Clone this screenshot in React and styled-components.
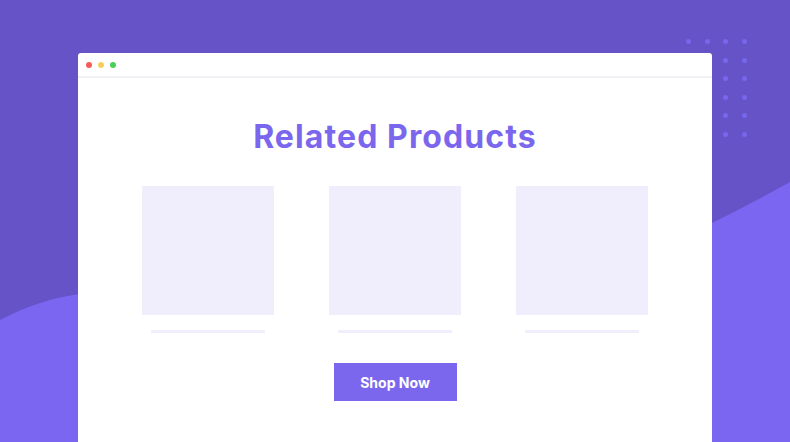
import React from "react";
import styled, { createGlobalStyle } from "styled-components";

const Global = createGlobalStyle`
  html, body { margin: 0; padding: 0; }
  body { font-family: Inter, "Open Sans", Arial, sans-serif; }
`;

const Stage = styled.div`
  position: relative;
  width: 790px;
  height: 442px;
  overflow: hidden;
  background: #6553c7;
  box-sizing: border-box;
  padding: 53px 0 0 78px;
`;

const Wave = styled.svg`
  position: absolute;
  inset: 0;
  width: 790px;
  height: 442px;
`;

const DotGrid = styled.div`
  position: absolute;
  left: 686px;
  top: 39px;
  display: grid;
  grid-template-columns: repeat(4, 5px);
  grid-auto-rows: 5px;
  column-gap: 13.7px;
  row-gap: 13.6px;
`;

const Dot = styled.span`
  width: 5px;
  height: 5px;
  border-radius: 50%;
  background: #7767ec;
  opacity: ${(p) => (p.$hidden ? 0 : 1)};
`;

const Window = styled.div`
  position: relative;
  width: 634px;
  height: 389px;
  background: #ffffff;
  border-radius: 3px 3px 0 0;
  display: flex;
  flex-direction: column;
`;

const TopBar = styled.div`
  height: 23px;
  border-bottom: 2px solid #f1f1f6;
  display: flex;
  align-items: center;
  gap: 6px;
  padding: 0 0 0 8px;
`;

const Light = styled.span`
  width: 6px;
  height: 6px;
  border-radius: 50%;
  background: ${(p) => p.$c};
`;

const Content = styled.div`
  display: flex;
  flex-direction: column;
  align-items: center;
  padding-top: 39px;
`;

const Title = styled.h1`
  margin: 0;
  font-family: Inter, "Open Sans", sans-serif;
  font-weight: 700;
  font-size: 32px;
  letter-spacing: 1.1px;
  line-height: 40px;
  color: #7b67ee;
`;

const Cards = styled.div`
  display: flex;
  gap: 55px;
  margin-top: 29px;
`;

const Card = styled.div`
  width: 132px;
  display: flex;
  flex-direction: column;
  align-items: center;
`;

const Thumb = styled.div`
  width: 132px;
  height: 129px;
  background: #f0eefd;
`;

const Caption = styled.div`
  width: 114px;
  height: 3px;
  margin-top: 15px;
  background: #f0eefc;
  border-radius: 1px;
`;

const Button = styled.button`
  margin-top: 30px;
  width: 123px;
  height: 38px;
  border: none;
  background: #7b67ee;
  color: #ffffff;
  font-family: Inter, "Open Sans", sans-serif;
  font-weight: 700;
  font-size: 14px;
  cursor: pointer;
`;

export default function App() {
  const dots = [];
  for (let r = 0; r < 6; r++) {
    for (let c = 0; c < 4; c++) {
      dots.push(<Dot key={`${r}-${c}`} $hidden={r > 0 && c < 2} />);
    }
  }
  return (
    <>
      <Global />
      <Stage>
        <Wave viewBox="0 0 790 442">
          <path
            d="M0 320 Q 40 299 80 294 L 712 223 Q 752 203 790 182 L 790 442 L 0 442 Z"
            fill="#7a66f0"
          />
        </Wave>
        <DotGrid>{dots}</DotGrid>
        <Window>
          <TopBar>
            <Light $c="#f65c5c" />
            <Light $c="#f8cf5d" />
            <Light $c="#4ccf58" />
          </TopBar>
          <Content>
            <Title>Related Products</Title>
            <Cards>
              {[0, 1, 2].map((i) => (
                <Card key={i}>
                  <Thumb />
                  <Caption />
                </Card>
              ))}
            </Cards>
            <Button>Shop Now</Button>
          </Content>
        </Window>
      </Stage>
    </>
  );
}
